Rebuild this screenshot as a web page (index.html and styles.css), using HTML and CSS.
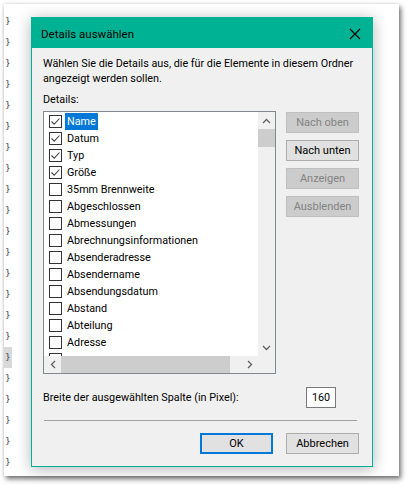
FILE: index.html
```html
<!DOCTYPE html>
<html lang="de">
<head>
  <meta charset="UTF-8">
  <title>Details auswählen</title>
  <link rel="stylesheet" href="styles.css">
</head>
<body>
  <!-- Explorer window behind the dialog -->
  <div class="explorer">
    <div class="names">
      <span>}</span><span>}</span><span>}</span><span>}</span><span>}</span><span>}</span>
      <span>}</span><span>}</span><span>}</span><span>}</span><span>}</span><span>}</span>
      <span>}</span><span>}</span><span>}</span><span>}</span><span class="sel">}</span><span>}</span>
      <span>}</span><span>}</span><span>}</span><span>}</span>
    </div>
  </div>

  <div class="dialog">
    <div class="titlebar">
      <span class="title">Details auswählen</span>
      <svg class="close" width="12" height="12" viewBox="0 0 12 12">
        <path d="M1 1 L11 11 M11 1 L1 11" stroke="#000" stroke-width="1.1" fill="none"/>
      </svg>
    </div>

    <div class="content">
      <p class="intro">Wählen Sie die Details aus, die für die Elemente in diesem Ordner<br>angezeigt werden sollen.</p>
      <div class="caption">Details:</div>

      <div class="main">
        <div class="listbox">
          <div class="list-area">
            <ul class="items">
              <li><i class="box checked"></i><span class="selected">Name</span></li>
              <li><i class="box checked"></i><span>Datum</span></li>
              <li><i class="box checked"></i><span>Typ</span></li>
              <li><i class="box checked"></i><span>Größe</span></li>
              <li><i class="box"></i><span>35mm Brennweite</span></li>
              <li><i class="box"></i><span>Abgeschlossen</span></li>
              <li><i class="box"></i><span>Abmessungen</span></li>
              <li><i class="box"></i><span>Abrechnungsinformationen</span></li>
              <li><i class="box"></i><span>Absenderadresse</span></li>
              <li><i class="box"></i><span>Absendername</span></li>
              <li><i class="box"></i><span>Absendungsdatum</span></li>
              <li><i class="box"></i><span>Abstand</span></li>
              <li><i class="box"></i><span>Abteilung</span></li>
              <li><i class="box"></i><span>Adresse</span></li>
              <li><i class="box"></i></li>
            </ul>
            <div class="vscroll">
              <div class="arrow">
                <svg width="9" height="6" viewBox="0 0 9 6"><path d="M1 5 L4.5 1.5 L8 5" stroke="#606060" stroke-width="1.3" fill="none"/></svg>
              </div>
              <div class="vthumb"></div>
              <div class="track"></div>
              <div class="arrow">
                <svg width="9" height="6" viewBox="0 0 9 6"><path d="M1 1 L4.5 4.5 L8 1" stroke="#606060" stroke-width="1.3" fill="none"/></svg>
              </div>
            </div>
          </div>
          <div class="hscroll-row">
            <div class="hscroll">
              <div class="arrow">
                <svg width="6" height="9" viewBox="0 0 6 9"><path d="M5 1 L1.5 4.5 L5 8" stroke="#606060" stroke-width="1.3" fill="none"/></svg>
              </div>
              <div class="hthumb"></div>
              <div class="track"></div>
              <div class="arrow">
                <svg width="6" height="9" viewBox="0 0 6 9"><path d="M1 1 L4.5 4.5 L1 8" stroke="#606060" stroke-width="1.3" fill="none"/></svg>
              </div>
            </div>
            <div class="corner"></div>
          </div>
        </div>

        <div class="side-buttons">
          <button class="btn" disabled>Nach oben</button>
          <button class="btn">Nach unten</button>
          <button class="btn" disabled>Anzeigen</button>
          <button class="btn" disabled>Ausblenden</button>
        </div>
      </div>

      <div class="width-row">
        <span>Breite der ausgewählten Spalte (in Pixel):</span>
        <div class="num">160</div>
      </div>

      <div class="separator"></div>

      <div class="footer">
        <button class="btn default">OK</button>
        <button class="btn">Abbrechen</button>
      </div>
    </div>
  </div>
</body>
</html>
```

FILE: styles.css
```css
body {
  margin: 0;
  width: 408px;
  height: 486px;
  overflow: hidden;
  background-color: #fff;
  font-family: Roboto, "Noto Sans", sans-serif;
  font-size: 10.8px;
  color: #000;
  position: relative;
}

/* Explorer window in the background */
.explorer {
  margin: 4px;
  width: 395px;
  height: 472px;
  background-color: #fff;
  box-shadow: 2px 3px 5px rgba(0, 0, 0, 0.55), 0 0 3px rgba(0, 0, 0, 0.12);
}

.names {
  width: 9px;
  padding-top: 7px;
}

.names span {
  display: block;
  height: 21px;
  line-height: 21px;
  padding-left: 1px;
  color: #3c3c50;
  font-family: "DejaVu Sans", sans-serif;
  font-size: 9px;
}

.names .sel {
  background-color: #d9d9d9;
  width: 7px;
}

/* Dialog */
.dialog {
  position: absolute;
  left: 31px;
  top: 17px;
  width: 342px;
  height: 450px;
  box-sizing: border-box;
  border: 1px solid #00b294;
  background-color: #f0f0f0;
  box-shadow: 0 2px 14px rgba(0, 0, 0, 0.3);
}

.titlebar {
  height: 30px;
  background-color: #00b294;
  display: flex;
  align-items: center;
  justify-content: space-between;
  padding: 0 11px 0 9px;
}

.title {
  font-size: 11.5px;
  margin-top: 1px;
}

.close {
  margin-top: 1px;
}

.content {
  padding: 0 13px 0 11px;
}

.intro {
  margin: 8px 0 0;
  line-height: 15px;
  white-space: nowrap;
}

.caption {
  margin-top: 6px;
  line-height: 15px;
}

.main {
  display: flex;
  gap: 10px;
  margin-top: 4px;
}

/* List with checkboxes */
.listbox {
  width: 234px;
  height: 263px;
  box-sizing: border-box;
  border: 1px solid #828790;
  background-color: #fff;
  display: flex;
  flex-direction: column;
}

.list-area {
  flex: 1;
  display: flex;
  overflow: hidden;
}

.items {
  flex: 1;
  list-style: none;
  margin: 0;
  padding: 1px 0 0;
  overflow: hidden;
}

.items li {
  height: 17px;
  display: flex;
  align-items: center;
  padding-left: 5px;
}

.items li span {
  padding: 0 2px;
  line-height: 17px;
  margin-left: 3px;
  white-space: nowrap;
}

.items li .selected {
  background-color: #0078d7;
  color: #fff;
}

.box {
  width: 11px;
  height: 11px;
  border: 1px solid #333;
  background-color: #fff;
  flex: none;
}

.box.checked {
  background: #fff url("data:image/svg+xml;utf8,<svg xmlns='http://www.w3.org/2000/svg' width='11' height='11'><path d='M1.5 5.5 L4.2 8.2 L9.5 2.5' stroke='%23444' stroke-width='1.1' fill='none'/></svg>") no-repeat;
}

.vscroll {
  width: 17px;
  background-color: #f0f0f0;
  display: flex;
  flex-direction: column;
}

.vscroll .arrow {
  height: 17px;
  display: flex;
  align-items: center;
  justify-content: center;
}

.vthumb {
  height: 18px;
  background-color: #cdcdcd;
}

.track {
  flex: 1;
}

.hscroll-row {
  height: 17px;
  display: flex;
}

.hscroll {
  flex: 1;
  display: flex;
  background-color: #f0f0f0;
}

.hscroll .arrow {
  width: 17px;
  display: flex;
  align-items: center;
  justify-content: center;
}

.hthumb {
  width: 169px;
  background-color: #cdcdcd;
}

.corner {
  width: 17px;
  background-color: #f0f0f0;
}

/* Buttons */
.side-buttons {
  display: flex;
  flex-direction: column;
  gap: 7px;
  margin-top: 1px;
}

.btn {
  width: 73px;
  height: 21px;
  box-sizing: border-box;
  border: 1px solid #adadad;
  background-color: #e1e1e1;
  font-family: inherit;
  font-size: 11px;
  color: #000;
  padding: 0;
}

.btn:disabled {
  background-color: #cccccc;
  border-color: #bfbfbf;
  color: #838383;
}

.btn.default {
  border: 2px solid #0078d7;
}

.width-row {
  display: flex;
  justify-content: space-between;
  align-items: center;
  margin-top: 13px;
  padding-right: 23px;
}

.num {
  width: 30px;
  height: 21px;
  box-sizing: border-box;
  border: 1px solid #7a7a7a;
  background-color: #fff;
  text-align: center;
  line-height: 19px;
}

.separator {
  height: 1px;
  background-color: #a0a0a0;
  margin: 12px 2px 0 1px;
}

.footer {
  display: flex;
  justify-content: flex-end;
  gap: 13px;
  margin-top: 12px;
}
```
